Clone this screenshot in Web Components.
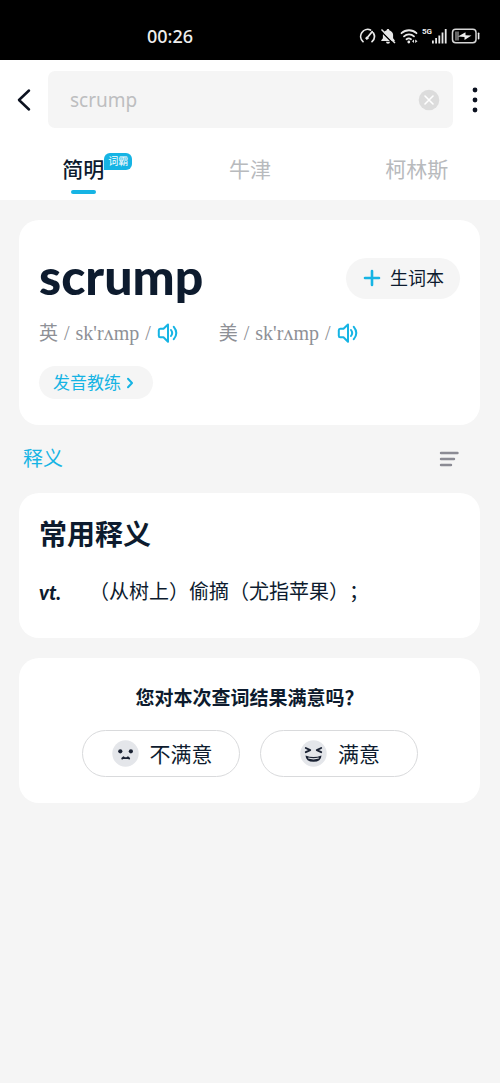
<!DOCTYPE html>
<html lang="zh-CN">
<head>
<meta charset="utf-8">
<meta name="viewport" content="width=device-width, initial-scale=1">
<title>scrump</title>
<style>
  :root {
    --ink: #0d1b2e;
    --muted: #b8babd;
    --grey: #8e9096;
    --accent: #16b4e4;
    --surface: #f5f5f5;
  }
  body {
    margin: 0;
    min-height: 100vh;
    background: var(--surface);
    color: var(--ink);
    font-family: "Noto Sans", "Noto Sans CJK SC", sans-serif;
  }
</style>
</head>
<body>
<dict-page></dict-page>

<template id="status-bar">
  <style>
    :host { display: flex; align-items: center; justify-content: space-between; box-sizing: border-box; height: 60px; padding: 12px 20px 0 147px; background: #000; color: #eee; }
    time { font-size: 18px; line-height: 24px; font-weight: 500; }
    svg { display: block; }
    .icons { display: flex; align-items: center; gap: 4px; }
    .net { display: flex; align-items: flex-start; gap: 0; }
    .net span { font: 700 8px/8px Roboto, sans-serif; }
  </style>
  <time>00:26</time>
  <div class="icons">
    <svg width="17" height="16" viewBox="0 0 17 16" fill="none" stroke="#e8e8e8" stroke-width="1.7" stroke-linecap="round"><path d="M4 13.6A7 7 0 0 1 11.5 2M14.4 5A7 7 0 0 1 13 13.6M7.8 10.3 13.2 3.6"/><circle cx="7.9" cy="10.2" r="1.1" fill="#e8e8e8" stroke-width="1"/></svg>
    <svg width="16" height="16" viewBox="0 0 16 16" fill="#e8e8e8"><path d="M8 1c.8 0 1.3.5 1.3 1.2 2 .6 3.800 2.300 3.800 4.500v3.600l1.600 2v.8H1.300v-.8l1.600-2V6.700c0-2.200 1.800-3.900 3.800-4.500C6.700 1.500 7.200 1 8 1ZM6 13.800h4a2 2 0 0 1-4 0Z"/><path d="M1 3.200 13.800 16" stroke="#000" stroke-width="1.500"/><path d="M1.500 1.500 15 15" stroke="#e8e8e8" stroke-width="1.500"/></svg>
    <svg width="18" height="16" viewBox="0 0 18 16" fill="none" stroke="#e8e8e8" stroke-width="1.8" stroke-linecap="round"><path d="M1.500 5.200a11 11 0 0 1 15 0M4 8.300a7.200 7.200 0 0 1 10 0M6.500 11.200a3.700 3.700 0 0 1 4.500 0"/><circle cx="8.800" cy="14" r="1.400" fill="#e8e8e8" stroke="none"/><path d="M12 13.200 14 11.500V15ZM15.200 11.500 17.500 13.200 15.200 15Z" fill="#e8e8e8" stroke="none"/></svg>
    <div class="net"><span>5G</span>
    <svg width="15" height="16" viewBox="0 0 15 16" fill="#e8e8e8"><rect y="12.500" width="1.800" height="3"/><rect x="3.200" y="10" width="1.800" height="5.500"/><rect x="6.400" y="7.500" width="1.800" height="8"/><rect x="9.600" y="4.500" width="1.800" height="11"/><rect x="12.800" y="1" width="1.800" height="14.500"/></svg></div>
    <svg width="29" height="16" viewBox="0 0 29 16"><rect x="1.500" y="1.300" width="23.500" height="13.400" rx="3.200" fill="none" stroke="#d5d5d5" stroke-width="1.500"/><rect x="4" y="3.500" width="4" height="9" fill="#666"/><path d="M7 8.600 14.500 4.200v3L20.500 7.400 13.500 12V9Z" fill="#eee"/><rect x="26.800" y="4.500" width="1.600" height="7" rx=".8" fill="#eee"/></svg>
  </div>
</template>

<template id="search-bar">
  <style>
    :host { display: flex; align-items: center; padding: 11px 0 0; background: #fff; }
    button { display: grid; place-items: center; padding: 0; border: 0; background: none; height: 57px; }
    .back { width: 48px; }
    .more { width: 47px; padding-right: 4px; }
    .clear { width: 48px; }
    svg { display: block; }
    label { flex: 1; min-width: 0; display: flex; align-items: center; height: 57px; border-radius: 7px; background: var(--surface); }
    input { flex: 1; min-width: 0; padding: 0 0 0 22px; border: 0; outline: 0; background: none; color: #bdbec0; font: 400 19px/28px "Noto Sans", sans-serif; }
  </style>
  <button class="back" aria-label="返回"><svg width="16" height="24" viewBox="0 0 16 24" fill="none" stroke="#0c1220" stroke-width="2.5" stroke-linecap="round" stroke-linejoin="round"><path d="M13 2.500 3 12l10 9.500"/></svg></button>
  <label>
    <input type="text" value="scrump" aria-label="搜索">
    <button class="clear" aria-label="清除"><svg width="22" height="22" viewBox="0 0 22 22"><circle cx="11" cy="11" r="10.300" fill="#dcdcdc"/><path d="m7 7 8 8m0-8-8 8" stroke="#fff" stroke-width="1.600" stroke-linecap="round"/></svg></button>
  </label>
  <button class="more" aria-label="更多"><svg width="6" height="26" viewBox="0 0 6 26" fill="#0c1220"><circle cx="3" cy="3" r="2.400"/><circle cx="3" cy="13" r="2.400"/><circle cx="3" cy="23" r="2.400"/></svg></button>
</template>

<template id="dict-tabs">
  <style>
    :host { display: block; background: #fff; }
    nav { display: grid; grid-template-columns: repeat(3, 1fr); height: 72px; }
    a { display: flex; flex-direction: column; align-items: center; padding-top: 27px; color: var(--muted); font-size: 21px; line-height: 28px; text-decoration: none; }
    .name { position: relative; }
    [aria-current] { color: var(--ink); font-weight: 500; }
    [aria-current]::after { content: ""; width: 25px; height: 4px; margin-top: 7px; border-radius: 2px; background: var(--accent); }
    .badge { position: absolute; left: 100%; top: -2px; width: 28px; height: 17px; border-radius: 6px 6px 6px 0; background: var(--accent); color: #fff; font-size: 10px; line-height: 17px; font-weight: 400; text-align: center; white-space: nowrap; }
  </style>
  <nav>
    <a href="#concise" aria-current="page"><span class="name">简明<span class="badge">词霸</span></span></a>
    <a href="#oxford">牛津</a>
    <a href="#collins">柯林斯</a>
  </nav>
</template>

<template id="dict-card">
  <style>
    :host { display: block; padding: 20px; border-radius: 20px; background: #fff; }
  </style>
  <slot></slot>
</template>

<template id="phonetic-item">
  <style>
    :host { display: flex; align-items: center; gap: 6px; color: var(--grey); font-size: 19px; line-height: 28px; white-space: nowrap; }
    .ipa { display: flex; gap: 6px; font-family: "Liberation Serif", serif; font-size: 20px; }
    button { display: block; padding: 0; border: 0; background: none; }
    svg { display: block; }
  </style>
  <slot></slot>
  <span class="ipa"><span>/</span><slot name="ipa"></slot><span>/</span></span>
  <button aria-label="播放发音"><svg width="22" height="22" viewBox="0 0 22 22" fill="none" stroke="#16b4e4" stroke-width="2" stroke-linecap="round" stroke-linejoin="round"><path d="M11 2.500 6.500 6.800H3.200Q1.800 6.800 1.800 8.300v5.400q0 1.500 1.400 1.500h3.300L11 19.700Z"/><path d="M14 8q2.400 3 0 6M16.800 4.800q5 6.200 0 12.400"/></svg></button>
</template>

<template id="word-card">
  <style>
    :host { display: block; }
    .top { display: flex; align-items: center; justify-content: space-between; padding-top: 8px; }
    h1 { margin: 0; padding-bottom: 4px; font: 900 50px/56px Lato, sans-serif; }
    button { display: flex; align-items: center; border: 0; background: var(--surface); font-family: inherit; }
    .add { height: 41px; padding: 0 16px 0 17px; gap: 9px; border-radius: 21px; color: var(--ink); font-size: 18px; line-height: 28px; }
    .coach { height: 33px; margin: 19px 0 6px; padding: 0 18px 0 14px; gap: 4px; border-radius: 17px; color: var(--accent); font-size: 17px; line-height: 24px; }
    .sounds { display: flex; gap: 40px; margin-top: 11px; }
    svg { display: block; }
  </style>
  <dict-card>
    <div class="top">
      <h1>scrump</h1>
      <button class="add"><svg width="18" height="18" viewBox="0 0 18 18" stroke="#16b4e4" stroke-width="2.6" stroke-linecap="round"><path d="M9 2v14M2 9h14"/></svg>生词本</button>
    </div>
    <div class="sounds">
      <phonetic-item>英<span slot="ipa">sk'rʌmp</span></phonetic-item>
      <phonetic-item>美<span slot="ipa">sk'rʌmp</span></phonetic-item>
    </div>
    <button class="coach">发音教练<svg width="10" height="12" viewBox="0 0 10 12" fill="none" stroke="#16b4e4" stroke-width="2" stroke-linecap="round" stroke-linejoin="round"><path d="m3 1.800 4 4.200-4 4.200"/></svg></button>
  </dict-card>
</template>

<template id="section-bar">
  <style>
    :host { display: flex; align-items: center; justify-content: space-between; height: 68px; padding: 0 20px 0 4px; }
    h2 { margin: 0; color: var(--accent); font-size: 20px; line-height: 28px; font-weight: 400; }
    button { padding: 0; border: 0; background: none; }
    svg { display: block; }
  </style>
  <h2><slot></slot></h2>
  <button aria-label="目录"><svg width="21" height="16" viewBox="0 0 21 16" stroke="#8b8b94" stroke-width="2.4" stroke-linecap="round"><path d="M2 2h16.500M2 8h13M2 14h10"/></svg></button>
</template>

<template id="meaning-card">
  <style>
    :host { display: block; }
    h3 { margin: 1px 0 23px; font-size: 28px; line-height: 40px; font-weight: 700; }
    dl { display: flex; align-items: center; margin: 0 0 11px; font-size: 20px; line-height: 30px; }
    dt { width: 50px; font: italic 900 20px/30px Lato, sans-serif; }
    dd { margin: 0; text-spacing-trim: space-all; }
  </style>
  <dict-card>
    <h3>常用释义</h3>
    <dl><dt>vt.</dt><dd>（从树上）偷摘（尤指苹果）；</dd></dl>
  </dict-card>
</template>

<template id="feedback-card">
  <style>
    :host { display: block; }
    p { margin: 6px 0 18px; font-size: 19px; line-height: 28px; font-weight: 700; text-align: center; text-spacing-trim: space-all; }
    .choices { display: flex; justify-content: center; gap: 20px; margin-bottom: 6px; }
    button { display: flex; align-items: center; justify-content: center; gap: 11px; box-sizing: border-box; width: 158px; height: 47px; padding: 0 0 0 3px; border: 1px solid #d9dadc; border-radius: 24px; background: #fff; color: var(--ink); font-family: inherit; font-size: 21px; line-height: 30px; }
    svg { display: block; }
  </style>
  <dict-card>
    <p>您对本次查词结果满意吗？</p>
    <div class="choices">
      <button><svg width="27" height="27" viewBox="0 0 27 27"><circle cx="13.500" cy="13.500" r="13.200" fill="#e4e6ea"/><g fill="#1a2233"><circle cx="8.300" cy="11.300" r="2.100"/><circle cx="18.900" cy="11.300" r="2.100"/></g><path d="M10.200 18.500 11.400 17.300 12.700 18.200H14.700L16 17.300 17.200 18.500" fill="none" stroke="#1a2233" stroke-width="1.800" stroke-linecap="round" stroke-linejoin="round"/></svg>不满意</button>
      <button><svg width="27" height="27" viewBox="0 0 27 27"><circle cx="13.500" cy="13.500" r="13.200" fill="#e4e6ea"/><path d="m5.800 8 4.400 2.200-4.400 2M21.200 8l-4.400 2.200 4.400 2" fill="none" stroke="#1a2233" stroke-width="1.900" stroke-linecap="round" stroke-linejoin="round"/><path d="M5.500 15.500q8 3 16 0-.3 6.300-8 6.300T5.500 15.500Z" fill="#1a2233"/><path d="M8.200 18q5.300 1.600 10.600 0" fill="none" stroke="#e4e6ea" stroke-width="1.300"/></svg>满意</button>
    </div>
  </dict-card>
</template>

<template id="dict-page">
  <style>
    :host { display: block; }
    main { display: block; padding: 20px 20px 20px 19px; }
    feedback-card { margin-top: 20px; }
  </style>
  <status-bar></status-bar>
  <search-bar></search-bar>
  <dict-tabs></dict-tabs>
  <main>
    <word-card></word-card>
    <section-bar>释义</section-bar>
    <meaning-card></meaning-card>
    <feedback-card></feedback-card>
  </main>
</template>

<script>
  class TemplateElement extends HTMLElement {
    constructor() {
      super();
      const template = document.getElementById(this.localName);
      this.attachShadow({ mode: "open" }).append(document.importNode(template.content, true));
    }
  }
  customElements.define("status-bar", class StatusBar extends TemplateElement {});
  customElements.define("search-bar", class SearchBar extends TemplateElement {
    connectedCallback() {
      const input = this.shadowRoot.querySelector("input");
      this.shadowRoot.querySelector(".clear").onclick = () => { input.value = ""; input.focus(); };
    }
  });
  customElements.define("dict-tabs", class DictTabs extends TemplateElement {});
  customElements.define("dict-card", class DictCard extends TemplateElement {});
  customElements.define("phonetic-item", class PhoneticItem extends TemplateElement {});
  customElements.define("word-card", class WordCard extends TemplateElement {});
  customElements.define("section-bar", class SectionBar extends TemplateElement {});
  customElements.define("meaning-card", class MeaningCard extends TemplateElement {});
  customElements.define("feedback-card", class FeedbackCard extends TemplateElement {});
  customElements.define("dict-page", class DictPage extends TemplateElement {});
</script>
</body>
</html>
